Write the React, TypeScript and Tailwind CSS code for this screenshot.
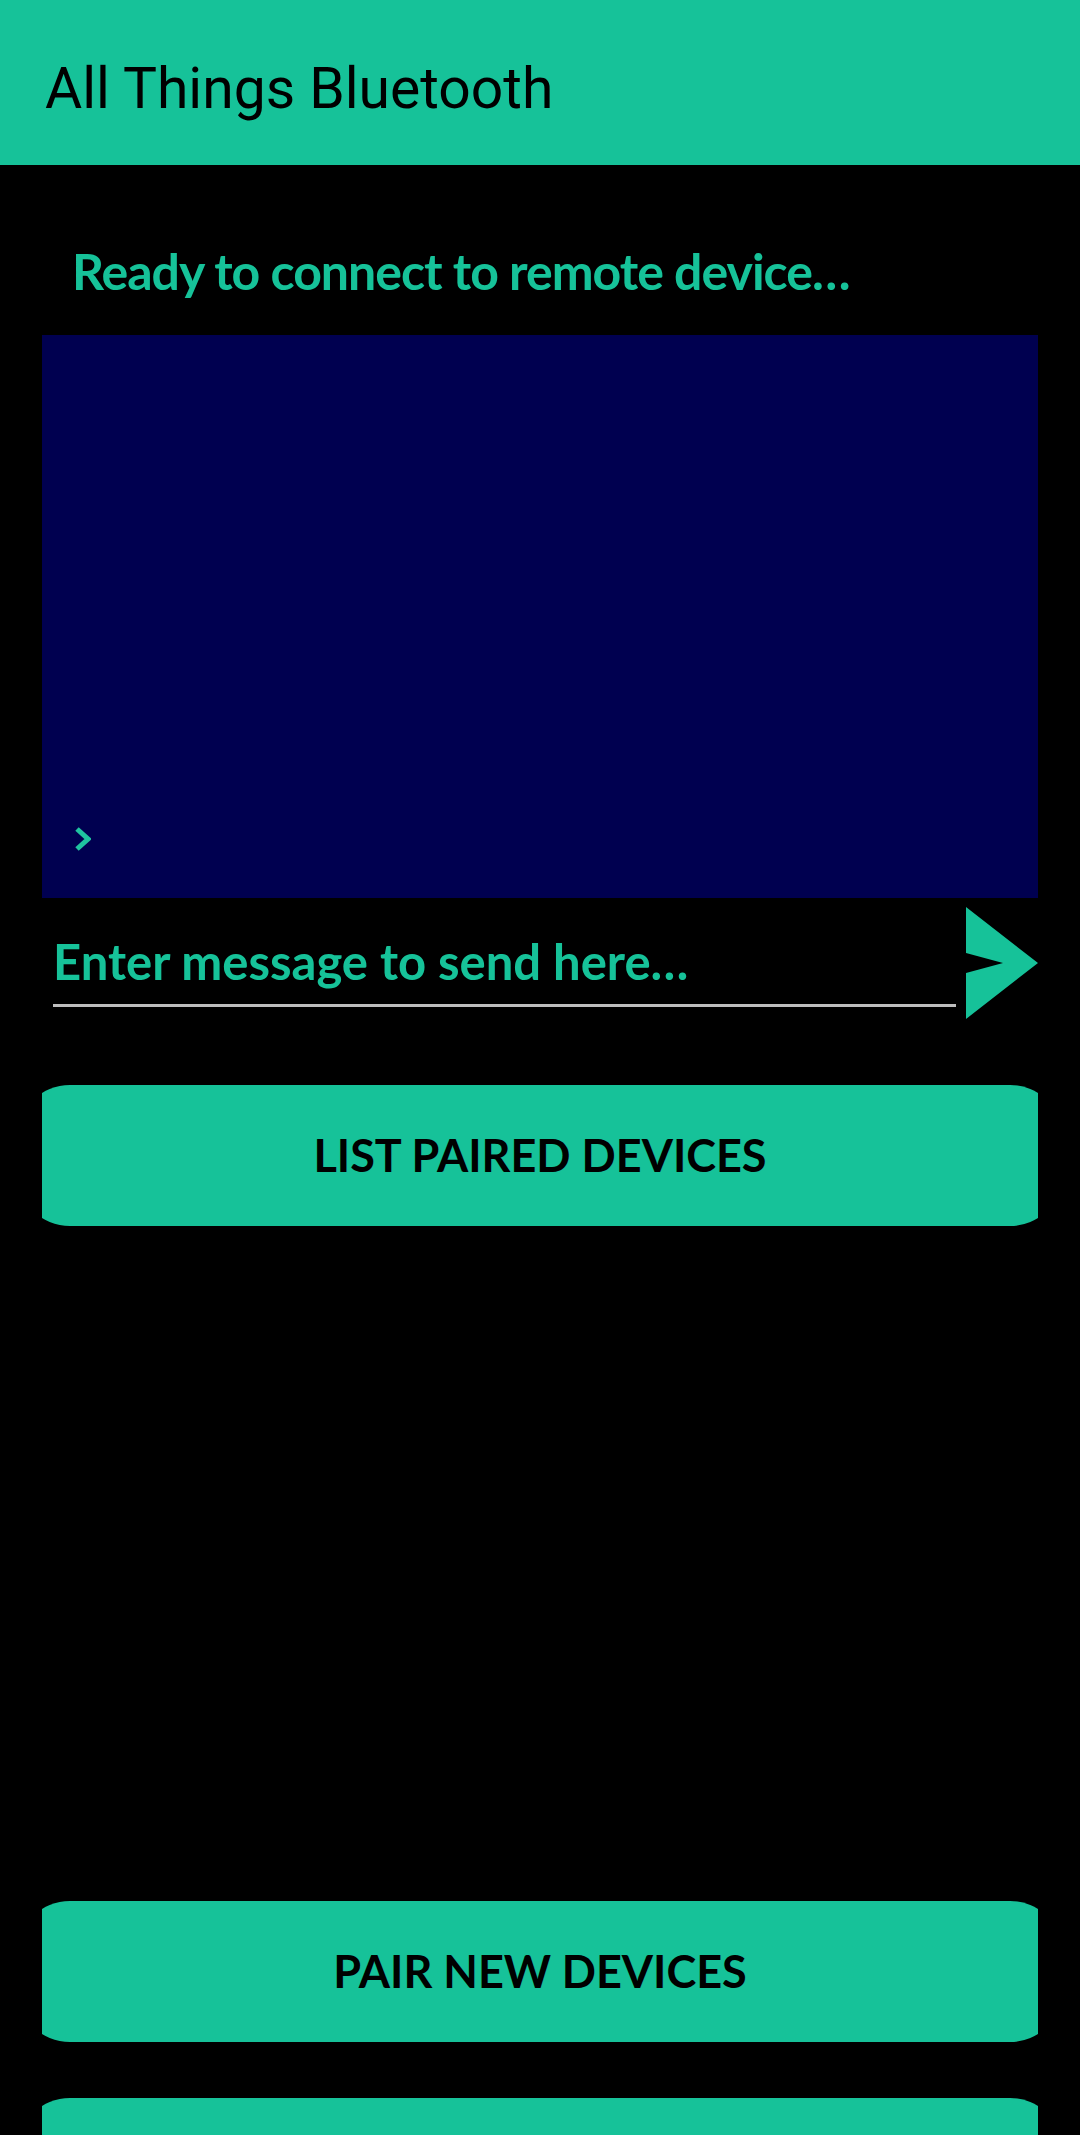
import React from "react";

// Main screen of the bluetooth terminal app
const green = "bg-[#16c299]";

function SendIcon() {
  return (
    <svg width="72" height="112" viewBox="0 0 72 112" className="shrink-0">
      <path d="M0 0 L72 56 L0 112 L0 66 L37 56 L0 46 Z" fill="#16c299" />
    </svg>
  );
}

function ActionButton({ label }: { label?: string }) {
  return (
    <div className="mx-[42px] h-[141px] overflow-hidden shrink-0">
      <button
        className={`${green} -mx-[25px] w-[calc(100%+50px)] h-full rounded-[53px] flex items-center justify-center text-black text-[45px] font-bold leading-none`}
        style={{ fontFamily: "Lato, 'Noto Sans', sans-serif" }}
      >
        {label}
      </button>
    </div>
  );
}

export default function App() {
  return (
    <div
      className="h-[2135px] w-full overflow-hidden bg-black flex flex-col"
      style={{ fontFamily: "Lato, 'Noto Sans', sans-serif" }}
    >
      {/* Toolbar */}
      <header className={`${green} h-[165px] shrink-0 flex items-center pl-[45px] pt-[12px]`}>
        <h1
          className="text-[57px] text-black leading-none"
          style={{ fontFamily: "Roboto, sans-serif" }}
        >
          All Things Bluetooth
        </h1>
      </header>

      {/* Status line */}
      <div className="h-[170px] shrink-0 pl-[72px] pt-[81px]">
        <p className="text-[#16c299] text-[50px] font-bold leading-none tracking-[-1px]">
          Ready to connect to remote device…
        </p>
      </div>

      {/* Received messages */}
      <div className="mx-[42px] h-[563px] shrink-0 bg-[#000050] flex flex-col justify-end pl-[33px] pb-[47px]">
        <svg width="16" height="24" viewBox="0 0 16 24">
          <polyline points="2,2 13,12 2,22" fill="none" stroke="#1fc3a0" strokeWidth="5" />
        </svg>
      </div>

      {/* Message input + send */}
      <div className="h-[187px] shrink-0 flex items-start pl-[53px] pr-[42px] pt-[9px]">
        <div className="flex-1 mr-[10px] border-b-[3px] border-[#bdbdbd] h-[100px] flex items-end pb-[18px]">
          <span className="text-[#16c299] text-[49px] font-bold leading-none">
            Enter message to send here…
          </span>
        </div>
        <SendIcon />
      </div>

      <ActionButton label="LIST PAIRED DEVICES" />

      {/* Paired device list (empty) */}
      <div className="h-[675px] shrink-0" />

      <ActionButton label="PAIR NEW DEVICES" />
      <div className="h-[56px] shrink-0" />
      <ActionButton />
    </div>
  );
}
